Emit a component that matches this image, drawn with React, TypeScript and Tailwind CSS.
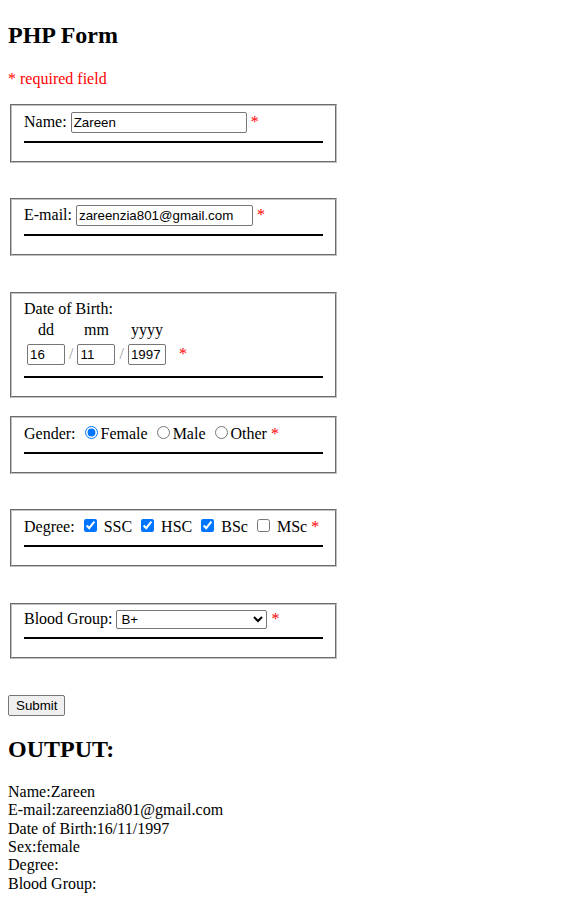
import React from "react";

const field =
  "mx-[2px] w-[327px] border-2 border-[#c0c0c0] [border-style:groove] px-3 pt-[5.6px] pb-[10px]";
const textInput =
  "h-[21px] rounded-[2px] border border-[#767676] bg-white px-[2px] py-[1px] font-['Liberation_Sans',Arial,sans-serif] text-[13.333px] leading-[normal] text-black outline-none";

function Star() {
  return <span className="text-[#ff0000]">*</span>;
}

function Box({ className = "", children }: { className?: string; children: React.ReactNode }) {
  return (
    <fieldset className={`${field} ${className}`}>
      {children}
      {/* separator line */}
      <div className="my-2 h-[2px] bg-black" />
    </fieldset>
  );
}

export default function App() {
  const output = [
    "Name:Zareen",
    "E-mail:zareenzia801@gmail.com",
    "Date of Birth:16/11/1997",
    "Sex:female",
    "Degree:",
    "Blood Group:",
  ];

  return (
    <div className="min-h-screen bg-white px-2 pt-[22px] pb-2 font-['Liberation_Serif','Times_New_Roman',serif] text-[16px] leading-[18.4px] text-black">
      <h2 className="text-[24px] leading-[27.6px] font-bold">PHP Form</h2>
      <p className="mt-[19.92px] text-[#ff0000]">* required field</p>

      <form className="mt-4" onSubmit={(e) => e.preventDefault()}>
        {/* Name */}
        <Box>
          <div>
            Name: <input type="text" defaultValue="Zareen" className={`${textInput} w-[176px]`} /> <Star />
          </div>
        </Box>

        {/* Email */}
        <Box className="mt-[35px]">
          <div>
            E-mail: <input type="text" defaultValue="zareenzia801@gmail.com" className={`${textInput} w-[177px]`} /> <Star />
          </div>
        </Box>

        {/* Date of Birth */}
        <Box className="mt-[36px]">
          <div>Date of Birth:</div>
          <div className="grid w-max grid-cols-[38px_auto_38px_auto_38px_auto] items-center gap-[4px] p-[3px]">
            <div className="text-center">dd</div>
            <div />
            <div className="text-center">mm</div>
            <div />
            <div className="text-center">yyyy</div>
            <div />
            <input type="text" defaultValue="16" className={`${textInput} w-[38px]`} />
            <span className="text-[#9a9a9a]">/</span>
            <input type="text" defaultValue="11" className={`${textInput} w-[38px]`} />
            <span className="text-[#9a9a9a]">/</span>
            <input type="text" defaultValue="1997" className={`${textInput} w-[38px]`} />
            <span className="pl-[9px]">
              <Star />
            </span>
          </div>
        </Box>

        {/* Gender */}
        <Box className="mt-[18px]">
          <div>
            Gender: <input type="radio" name="gender" defaultChecked className="mt-[3px] mr-[3px] ml-[5px]" />Female{" "}
            <input type="radio" name="gender" className="mt-[3px] mr-[3px] ml-[5px]" />Male{" "}
            <input type="radio" name="gender" className="mt-[3px] mr-[3px] ml-[5px]" />Other <Star />
          </div>
        </Box>

        {/* Degree */}
        <Box className="mt-[35px]">
          <div>
            Degree: <input type="checkbox" defaultChecked className="mt-[3px] mr-[3px] ml-[5px]" /> SSC{" "}
            <input type="checkbox" defaultChecked className="mt-[3px] mr-[3px] ml-[5px]" /> HSC{" "}
            <input type="checkbox" defaultChecked className="mt-[3px] mr-[3px] ml-[5px]" /> BSc{" "}
            <input type="checkbox" className="mt-[3px] mr-[3px] ml-[5px]" /> MSc <Star />
          </div>
        </Box>

        {/* Blood group */}
        <Box className="mt-[36px]">
          <div>
            Blood Group:{" "}
            <select
              defaultValue="B+"
              className="h-[19px] w-[151px] rounded-[2px] border border-[#767676] bg-white font-['Liberation_Sans',Arial,sans-serif] text-[13.333px] text-black"
            >
              <option value="">Select blood group</option>
              <option value="A+">A+</option>
              <option value="A-">A-</option>
              <option value="B+">B+</option>
              <option value="B-">B-</option>
              <option value="O+">O+</option>
              <option value="O-">O-</option>
              <option value="AB+">AB+</option>
              <option value="AB-">AB-</option>
            </select>{" "}
            <Star />
          </div>
        </Box>

        <div className="mt-[36px]">
          <button
            type="submit"
            className="h-[21px] rounded-[2px] border border-[#767676] bg-[#efefef] px-[7px] font-['Liberation_Sans',Arial,sans-serif] text-[13.333px] leading-[normal] text-black"
          >
            Submit
          </button>
        </div>
      </form>

      <h2 className="mt-[20px] text-[24px] leading-[27.6px] font-bold">OUTPUT:</h2>
      <div className="mt-[19px]">
        {output.map((line) => (
          <div key={line}>{line}</div>
        ))}
      </div>
    </div>
  );
}
